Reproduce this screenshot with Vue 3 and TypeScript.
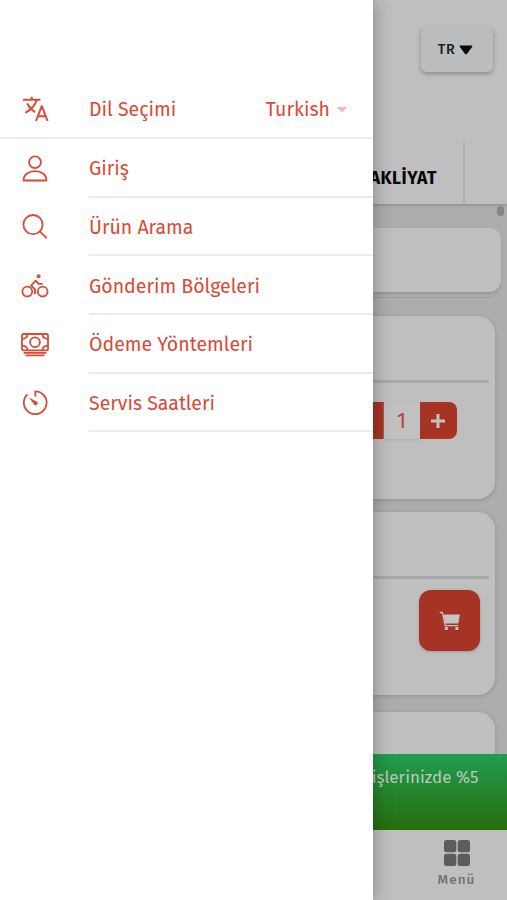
<script setup lang="ts">
interface MenuItem {
  label: string
  icon: string
}

const items: MenuItem[] = [
  { label: 'Giriş', icon: 'user' },
  { label: 'Ürün Arama', icon: 'search' },
  { label: 'Gönderim Bölgeleri', icon: 'bike' },
  { label: 'Ödeme Yöntemleri', icon: 'cash' },
  { label: 'Servis Saatleri', icon: 'timer' },
]
</script>

<template>
  <div class="app">
    <main class="page">
      <header class="header">
        <button class="lang">
          TR
          <svg width="14" height="10" viewBox="0 0 14 10"><path d="M1.2.6h11.6q1 .1.4 1.2L7.9 8.9q-.9.9-1.8 0L.8 1.8Q.2.7 1.2.6z" fill="#090909" /></svg>
        </button>
        <div class="tabs">
          <span class="tab">NAKLİYAT</span>
        </div>
      </header>
      <section class="content">
        <i class="thumb"></i>
        <div class="search-wrap"><div class="search"></div></div>
        <article class="card">
          <hr class="rule" />
          <div class="stepper">
            <span class="step minus"></span>
            <span class="qty">1</span>
            <span class="step plus">
              <svg width="16" height="16" viewBox="0 0 16 16"><path d="M8 1v14M1 8h14" stroke="#c5c1c0" stroke-width="3" /></svg>
            </span>
          </div>
        </article>
        <article class="card">
          <hr class="rule" />
          <button class="cart">
            <svg width="22" height="20" viewBox="0 0 22 20" fill="none">
              <path d="M4.5 3.6h16.3l-1.4 9H6.2z" fill="#c8c2c0" />
              <path d="M.7 1.5h2.7L6.2 14.6h12.9" stroke="#c8c2c0" stroke-width="1.3" />
              <path d="M5.8 16h3v3h-3zM16.4 16h3v3h-3z" fill="#c8c2c0" />
            </svg>
          </button>
        </article>
        <article class="card last"></article>
      </section>
      <div class="promo">Online siparişlerinizde %5</div>
      <nav class="bottom">
        <div class="nav-item">
          <svg width="26" height="26" viewBox="0 0 26 26" fill="#5c5c5c">
            <rect width="12.3" height="12.3" rx="2.5" /><rect x="13.7" width="12.3" height="12.3" rx="2.5" />
            <rect y="13.7" width="12.3" height="12.3" rx="2.5" /><rect x="13.7" y="13.7" width="12.3" height="12.3" rx="2.5" />
          </svg>
          <span>Menü</span>
        </div>
      </nav>
    </main>

    <aside class="drawer">
      <div class="row language">
        <svg class="icon" viewBox="0 0 28 28">
          <path d="M2 4.7h17.4M10.7 1.8v2.9M15.7 4.7c-1.4 5.6-5.5 9.8-11.4 13.2M6.2 8.4c1.9 4 4.5 6.7 7.9 8.8M15 26l5.8-14.9L26.6 26M17 21.2h7.8" stroke-width="2" />
        </svg>
        <span class="label">Dil Seçimi</span>
        <span class="value">Turkish</span>
        <i class="caret"></i>
      </div>
      <div v-for="item in items" :key="item.icon" class="row">
        <svg class="icon" viewBox="0 0 28 28">
          <template v-if="item.icon === 'user'">
            <circle cx="14" cy="7.2" r="5.9" />
            <path d="M2.6 25.5c-.4-5.5 5-9.4 11.4-9.4s11.8 3.9 11.4 9.4z" />
          </template>
          <template v-else-if="item.icon === 'search'">
            <circle cx="12" cy="11.6" r="9.6" />
            <path d="M18.8 18.4l7 7" />
          </template>
          <template v-else-if="item.icon === 'bike'">
            <circle cx="6.3" cy="19.6" r="4.9" /><circle cx="21.7" cy="19.6" r="4.9" />
            <circle cx="17.6" cy="4.2" r="2" class="solid" />
            <path d="M13.9 22.3v-5.2l-3.8-3.4 4.6-5 3.1 3.2h3.9" stroke-width="1.9" />
          </template>
          <template v-else-if="item.icon === 'cash'">
            <rect x="1" y="3" width="26" height="16.4" rx="1.5" />
            <circle cx="14" cy="11.2" r="4.9" />
            <path d="M1.4 7.8q4.9-.2 5.1-4.6M26.6 7.8q-4.9-.2-5.1-4.6M1.4 14.6q4.9.2 5.1 4.6M26.6 14.6q-4.9.2-5.1 4.6M2.6 21.9h22.8M4.5 24.4h19" />
          </template>
          <template v-else>
            <path d="M14.3 7.6V2.3a11.4 11.4 0 1 1-7.9 3.1" />
            <path d="M8 8.6l7.6 3.9a2 2 0 1 1-2.7 2.8z" class="solid" />
          </template>
        </svg>
        <span class="label">{{ item.label }}</span>
      </div>
    </aside>
  </div>
</template>

<style>
body { margin: 0; overflow: hidden; }
</style>

<style scoped>
.app {
  position: relative;
  width: 507px;
  height: 900px;
  overflow: hidden;
  font-family: "Fira Sans", "Noto Sans", sans-serif;
}
.app *, .app *::before { box-sizing: border-box; }
.page { display: flex; flex-direction: column; height: 900px; background: #adadad; }
.header {
  position: relative;
  z-index: 1;
  display: flex;
  flex-direction: column;
  align-items: flex-end;
  height: 204px;
  padding-top: 27px;
  background: #bfbfbf;
  box-shadow: 0 1px 3px #888;
}
.lang {
  display: flex;
  align-items: center;
  justify-content: center;
  gap: 4px;
  width: 72px;
  height: 45px;
  margin-right: 14px;
  padding: 0 3px 0 0;
  border: 0;
  border-radius: 5px;
  background: #bbbcbe;
  box-shadow: 0 2px 4px #8a8a8a;
  color: #1c1c1c;
  font: 500 14.3px "Fira Sans", "Noto Sans", sans-serif;
  letter-spacing: .6px;
}
.tabs { display: flex; margin-top: 70px; margin-right: 42px; height: 62px; border-right: 2px solid #afafaf; }
.tab { padding: 25px 26px 0 0; font-size: 17.5px; line-height: 24px; font-weight: 700; letter-spacing: .5px; color: #080808; }
.content { position: relative; flex: none; height: 550px; padding-top: 24px; overflow: hidden; }
.thumb { position: absolute; top: 2px; right: 3px; width: 7px; height: 10px; border-radius: 4px; background: #868686; }
.search-wrap { width: 499px; height: 70px; border-bottom: 1px solid #9e9e9e; border-radius: 0 0 12px 0; }
.search { width: 501px; height: 64px; border-radius: 12px; background: #bfbfbf; box-shadow: 0 2px 3px #969696; }
.card {
  width: 495px;
  height: 183px;
  margin-bottom: 13px;
  padding: 64px 6px 0 0;
  border-radius: 17px;
  background: #bfbfbf;
  box-shadow: 0 1px 4px #8f8f8f;
}
.search-wrap + .card { margin-top: 18px; }
.card.last { margin-top: 17px; }
.rule { height: 3px; margin: 0; border: 0; background: #a9a9a9; }
.stepper { display: flex; justify-content: flex-end; height: 37px; margin: 19px 32.5px 0 0; }
.step { display: flex; align-items: center; justify-content: center; width: 37px; background: #a63424; }
.plus { border-radius: 0 8px 8px 0; }
.qty { width: 36px; background: #c1c1c1; box-shadow: 0 1px 2px #aaa; color: #b64635; font-size: 21.5px; line-height: 38px; text-align: center; }
.cart {
  display: flex;
  align-items: center;
  justify-content: center;
  width: 61px;
  height: 61px;
  margin: 11px 9px 0 auto;
  padding: 0;
  border: 0;
  border-radius: 12px;
  background: #a63424;
  box-shadow: 0 1px 3px #999;
}
.promo {
  flex: none;
  height: 76px;
  padding: 11px 28.5px 0 0;
  background: linear-gradient(#219d50, #276d0c);
  color: #bdc9bd;
  font-size: 17px;
  line-height: 25px;
  text-align: right;
  z-index: 1;
}
.bottom { display: flex; justify-content: flex-end; height: 70px; padding: 10px 31px 0 0; background: #bfbfbf; }
.nav-item { display: flex; flex-direction: column; align-items: center; width: 39px; color: #727272; font-size: 13.5px; font-weight: 500; line-height: 18px; letter-spacing: 1.1px; }
.nav-item svg { margin-bottom: 5px; }
.drawer {
  position: absolute;
  z-index: 2;
  inset: 0 auto 0 0;
  width: 373px;
  padding-top: 80px;
  background: #fff;
  box-shadow: 0 0 18px rgba(0, 0, 0, .32);
  color: #d84b37;
}
.row { position: relative; display: flex; align-items: center; height: 58.6px; padding: 2px 0 0 21px; }
.row::before { content: ""; position: absolute; left: 89px; right: 0; bottom: 0; height: 2px; background: #ececec; }
.language { height: 59.2px; padding-top: 0; }
.language::before { left: 0; }
.icon { flex: none; width: 28px; height: 28px; margin: 0 40px 1.5px 0; fill: none; stroke: #d84b37; stroke-width: 1.8; stroke-linejoin: round; }
.solid { fill: #d84b37; stroke: none; }
.label, .value { font-size: 19.5px; line-height: 28px; white-space: nowrap; }
.value { margin-left: auto; }
.caret { width: 12px; height: 6px; margin: 0 25px 0 6px; background: #efb8b0; clip-path: polygon(0 0, 100% 0, 50% 100%); }
</style>
